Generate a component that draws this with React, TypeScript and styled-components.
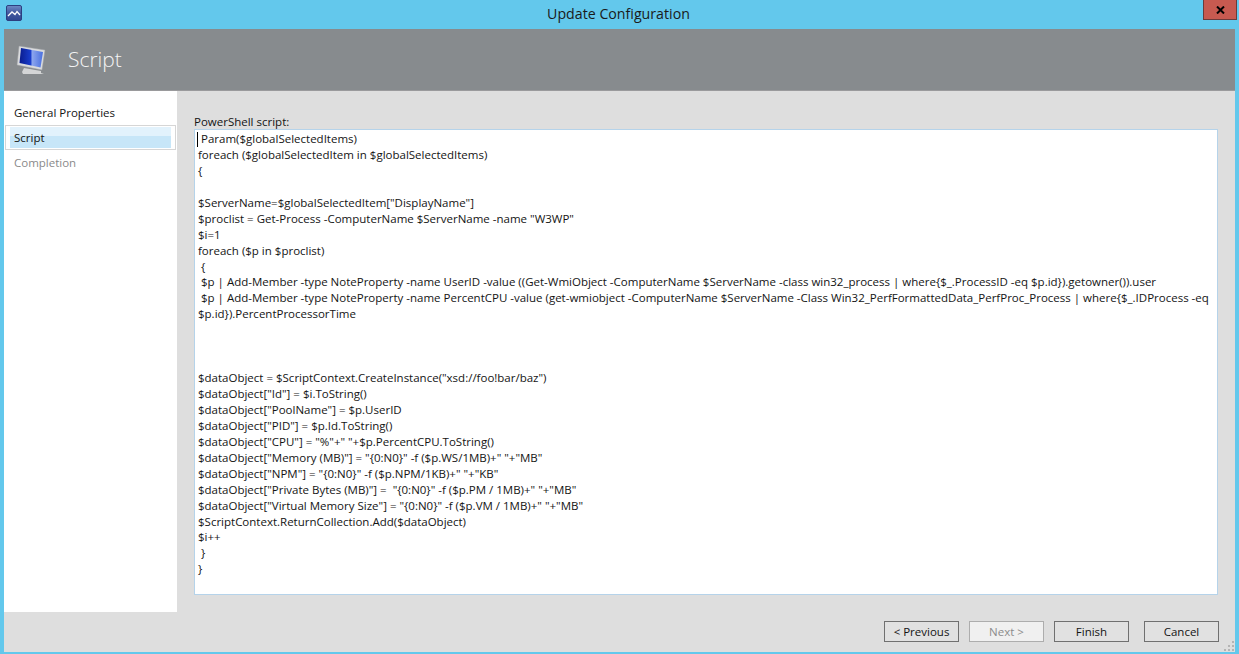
import styled, { createGlobalStyle } from "styled-components"

const GlobalStyle = createGlobalStyle`
    html, body {
        margin: 0;
        padding: 0;
        height: 100%;
        overflow: hidden;
    }

    body {
        font-family: "Open Sans", "Noto Sans", sans-serif;
        font-size: 11.5px;
        color: #141414;
    }
`

const scriptLines = [
    " Param($globalSelectedItems)",
    "foreach ($globalSelectedItem in $globalSelectedItems)",
    "{",
    "",
    '$ServerName=$globalSelectedItem["DisplayName"]',
    '$proclist = Get-Process -ComputerName $ServerName -name "W3WP"',
    "$i=1",
    "foreach ($p in $proclist)",
    " {",
    " $p | Add-Member -type NoteProperty -name UserID -value ((Get-WmiObject -ComputerName $ServerName -class win32_process | where{$_.ProcessID -eq $p.id}).getowner()).user",
    " $p | Add-Member -type NoteProperty -name PercentCPU -value (get-wmiobject -ComputerName $ServerName -Class Win32_PerfFormattedData_PerfProc_Process | where{$_.IDProcess -eq",
    "$p.id}).PercentProcessorTime",
    "",
    "",
    "",
    '$dataObject = $ScriptContext.CreateInstance("xsd://foo!bar/baz")',
    '$dataObject["Id"] = $i.ToString()',
    '$dataObject["PoolName"] = $p.UserID',
    '$dataObject["PID"] = $p.Id.ToString()',
    '$dataObject["CPU"] = "%"+" "+$p.PercentCPU.ToString()',
    '$dataObject["Memory (MB)"] = "{0:N0}" -f ($p.WS/1MB)+" "+"MB"',
    '$dataObject["NPM"] = "{0:N0}" -f ($p.NPM/1KB)+" "+"KB"',
    '$dataObject["Private Bytes (MB)"] =  "{0:N0}" -f ($p.PM / 1MB)+" "+"MB"',
    '$dataObject["Virtual Memory Size"] = "{0:N0}" -f ($p.VM / 1MB)+" "+"MB"',
    "$ScriptContext.ReturnCollection.Add($dataObject)",
    "$i++",
    " }",
    "}",
]

const App = () => {
    return (
        <Main>
            <GlobalStyle />

            <TitleBar>
                <AppIcon viewBox="0 0 16 16">
                    <defs>
                        <linearGradient id="appIcon" x1="0" y1="0" x2="0" y2="1">
                            <stop offset="0" stopColor="#6f8ac4" />
                            <stop offset="0.5" stopColor="#42599f" />
                            <stop offset="1" stopColor="#2f4690" />
                        </linearGradient>
                    </defs>
                    <rect x="0.5" y="0.5" width="15" height="15" rx="1.5" fill="url(#appIcon)" stroke="#2c3f80" />
                    <path d="M2 11 L6 7 L9 9.5 L11 6.5 L14 10" fill="none" stroke="#ffffff" strokeWidth="1.3" />
                </AppIcon>
                <WindowTitle>Update Configuration</WindowTitle>
                <CloseButton>
                    <svg width="9" height="8" viewBox="0 0 9 8">
                        <path d="M1 0.5 L8 7.5 M8 0.5 L1 7.5" stroke="#000000" strokeWidth="2" />
                    </svg>
                </CloseButton>
            </TitleBar>

            <Frame>
                <Header>
                    <MonitorIcon viewBox="0 0 30 30">
                        <defs>
                            <linearGradient id="screen" x1="0" y1="0" x2="1" y2="0">
                                <stop offset="0" stopColor="#0a1c8e" />
                                <stop offset="0.5" stopColor="#1a3fd0" />
                                <stop offset="0.52" stopColor="#8fa8ee" />
                                <stop offset="1" stopColor="#4a70e0" />
                            </linearGradient>
                        </defs>
                        <path d="M8 23 L25 26 L25 28 L28 29 L7 29 L6 27 Z" fill="#d4d5d6" />
                        <path d="M3 1 L29 5 L26 25 L1 20 Z" fill="#d9dbdd" stroke="#9a9da0" strokeWidth="0.5" />
                        <path d="M5 3 L27 7 L24.5 22.5 L3.5 18 Z" fill="url(#screen)" />
                    </MonitorIcon>
                    <HeaderTitle>Script</HeaderTitle>
                </Header>

                <Body>
                    <Sidebar>
                        <NavItem>General Properties</NavItem>
                        <NavItemActive>
                            <NavItemFill>Script</NavItemFill>
                        </NavItemActive>
                        <NavItem $disabled>Completion</NavItem>
                    </Sidebar>

                    <Content>
                        <FieldLabel>PowerShell script:</FieldLabel>
                        <ScriptBox>
                            <Caret />
                            {scriptLines.map((line, i) => (
                                <ScriptLine key={i}>{line || "\u00a0"}</ScriptLine>
                            ))}
                        </ScriptBox>
                    </Content>
                </Body>

                <Footer>
                    <Button>&lt; Previous</Button>
                    <Button disabled>Next &gt;</Button>
                    <Button>Finish</Button>
                    <CancelButton>Cancel</CancelButton>
                    <Grip viewBox="0 0 12 12">
                        <path d="M9 1h2v2H9z M5 5h2v2H5z M9 5h2v2H9z M1 9h2v2H1z M5 9h2v2H5z M9 9h2v2H9z" fill="#b4b4b4" />
                    </Grip>
                </Footer>
            </Frame>
        </Main>
    )
}

const Main = styled.main`
    width: 1239px;
    height: 654px;
    box-sizing: border-box;
    background: #63c8ec;
    display: flex;
    flex-direction: column;
    padding: 0 4px 2px;
`

const TitleBar = styled.div`
    position: relative;
    height: 29px;
    flex: none;
    margin: 0 -4px;
    display: flex;
    align-items: center;
    justify-content: center;
`

const AppIcon = styled.svg`
    position: absolute;
    left: 6px;
    top: 5px;
    width: 16px;
    height: 16px;
`

const WindowTitle = styled.span`
    font-size: 14.2px;
    color: #1a1a1a;
    margin: 0 2px 2px 0;
`

const CloseButton = styled.div`
    position: absolute;
    right: 2px;
    top: 0;
    width: 34px;
    height: 20px;
    box-sizing: border-box;
    background: #c75a50;
    border: 1px solid #6b3b3b;
    border-top: none;
    display: flex;
    align-items: center;
    justify-content: center;
`

const Frame = styled.div`
    flex: 1;
    min-height: 0;
    background: #dedede;
    display: flex;
    flex-direction: column;
`

const Header = styled.div`
    height: 61px;
    flex: none;
    background: #878b8e;
    border-bottom: 1px solid #9a9a9c;
    display: flex;
    align-items: center;
    padding-left: 12px;
`

const MonitorIcon = styled.svg`
    width: 30px;
    height: 30px;
    margin-right: 22px;
`

const HeaderTitle = styled.h1`
    margin: 0 0 2px;
    font-size: 21px;
    font-weight: 300;
    color: #f4f4f4;
`

const Body = styled.div`
    height: 521px;
    flex: none;
    display: flex;
`

const Sidebar = styled.nav`
    width: 173px;
    flex: none;
    background: #ffffff;
    padding-top: 12px;
    box-sizing: border-box;
`

const NavItem = styled.div<{ $disabled?: boolean }>`
    height: 22px;
    line-height: 19px;
    padding-left: 10px;
    color: ${(p) => (p.$disabled ? "#8a8a8a" : "#141414")};
`

const NavItemActive = styled.div`
    height: 25px;
    box-sizing: border-box;
    margin: 0 1px 3px;
    border: 1px solid #d6d6d6;
    padding: 1px 4px;
`

const NavItemFill = styled.div`
    height: 21px;
    line-height: 21px;
    padding-left: 4px;
    background: linear-gradient(#e2f2fc 0 9px, #c7e6f8 9px);
`

const Content = styled.div`
    flex: 1;
    padding: 23px 17px 0 17px;
    display: flex;
    flex-direction: column;
`

const FieldLabel = styled.label`
    height: 15px;
    line-height: 15px;
`

const ScriptBox = styled.div`
    position: relative;
    height: 466px;
    box-sizing: border-box;
    background: #ffffff;
    border: 1px solid #b5d3ea;
    padding: 1px 3px;
`

const Caret = styled.span`
    position: absolute;
    left: 2px;
    top: 2px;
    width: 1px;
    height: 15px;
    background: #000000;
`

const ScriptLine = styled.div`
    line-height: 15.93px;
    white-space: pre-wrap;
`

const Footer = styled.div`
    position: relative;
    flex: 1;
    display: flex;
    align-items: flex-start;
    justify-content: flex-end;
    gap: 10px;
    padding: 9px 16px 0 0;
`

const Button = styled.button`
    width: 75px;
    height: 21px;
    box-sizing: border-box;
    padding: 0;
    background: #e1e1e1;
    border: 1px solid #707070;
    font: inherit;
    color: #141414;

    &:disabled {
        background: #f0f0f0;
        border-color: #adadad;
        color: #8c8c8c;
    }
`

const CancelButton = styled(Button)`
    margin-left: 5px;
`

const Grip = styled.svg`
    position: absolute;
    right: 0;
    bottom: 0;
    width: 12px;
    height: 12px;
`

export default App
